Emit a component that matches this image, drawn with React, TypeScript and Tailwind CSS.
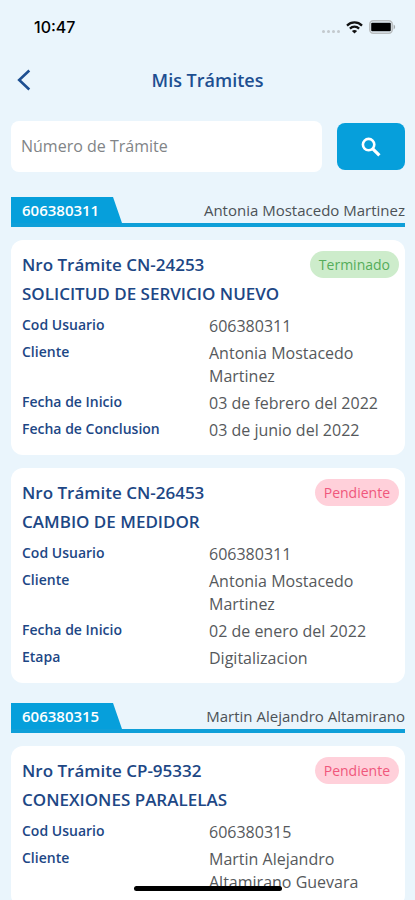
import React from 'react';

type Field = { label: string; value: string };

type Procedure = {
    code: string;
    title: string;
    status: 'Terminado' | 'Pendiente';
    fields: Field[];
};

type Account = {
    id: string;
    owner: string;
    procedures: Procedure[];
};

const accounts: Account[] = [
    {
        id: '606380311',
        owner: 'Antonia Mostacedo Martinez',
        procedures: [
            {
                code: 'CN-24253',
                title: 'SOLICITUD DE SERVICIO NUEVO',
                status: 'Terminado',
                fields: [
                    { label: 'Cod Usuario', value: '606380311' },
                    { label: 'Cliente', value: 'Antonia Mostacedo Martinez' },
                    { label: 'Fecha de Inicio', value: '03 de febrero del 2022' },
                    { label: 'Fecha de Conclusion', value: '03 de junio del 2022' },
                ],
            },
            {
                code: 'CN-26453',
                title: 'CAMBIO DE MEDIDOR',
                status: 'Pendiente',
                fields: [
                    { label: 'Cod Usuario', value: '606380311' },
                    { label: 'Cliente', value: 'Antonia Mostacedo Martinez' },
                    { label: 'Fecha de Inicio', value: '02 de enero del 2022' },
                    { label: 'Etapa', value: 'Digitalizacion' },
                ],
            },
        ],
    },
    {
        id: '606380315',
        owner: 'Martin Alejandro Altamirano',
        procedures: [
            {
                code: 'CP-95332',
                title: 'CONEXIONES PARALELAS',
                status: 'Pendiente',
                fields: [
                    { label: 'Cod Usuario', value: '606380315' },
                    { label: 'Cliente', value: 'Martin Alejandro Altamirano Guevara' },
                ],
            },
        ],
    },
];

const statusStyles = {
    Terminado: 'bg-[#cdeccb] text-[#55ad5a]',
    Pendiente: 'bg-[#ffd0da] text-[#f0577c]',
};

const StatusBar = () => (
    <div className="flex h-[54px] shrink-0 items-center justify-between pl-[34px] pr-[19px] font-['Inter',sans-serif]">
        <span className="text-base font-medium text-black">10:47</span>
        <div className="flex items-center gap-[6px]">
            <div className="flex gap-[2px] pt-2">
                <span className="size-[3px] rounded-full bg-[#c3c9cd]" />
                <span className="size-[3px] rounded-full bg-[#c3c9cd]" />
                <span className="size-[3px] rounded-full bg-[#c3c9cd]" />
                <span className="size-[3px] rounded-full bg-[#c3c9cd]" />
            </div>
            <svg width="17" height="13" viewBox="0 0 17 13" fill="none" stroke="#111" strokeWidth="2.2">
                <path d="M1 4.6C5.2 0.4 11.8 0.4 16 4.6" />
                <path d="M3.9 7.6C6.5 5 10.5 5 13.1 7.6" />
                <path d="M8.5 12.6L5.9 10C7.3 8.6 9.7 8.6 11.1 10Z" fill="#111" stroke="none" />
            </svg>
            <svg width="27" height="14" viewBox="0 0 27 14" fill="none">
                <rect x="0.8" y="0.8" width="22.4" height="12.4" rx="3.4" stroke="#b9bdbf" strokeWidth="1.6" />
                <rect x="2.2" y="2.8" width="19.6" height="8.4" rx="1" fill="#000" />
                <path d="M24.6 4.6C26.6 5.4 26.6 8.6 24.6 9.4Z" fill="#a5a9ab" />
            </svg>
        </div>
    </div>
);

const AccountHeader = ({ id, owner }: { id: string; owner: string }) => (
    <div className="flex h-[30px] items-start justify-between border-b-4 border-[#0f9fd8]">
        <span className="h-[26px] w-[111px] bg-[#069fdb] pl-[11px] text-[15px] leading-[27px] font-semibold text-white [clip-path:polygon(0_0,102px_0,100%_100%,0_100%)]">
            {id}
        </span>
        <span className="text-[15px] leading-[26px] text-[#4c5257]">{owner}</span>
    </div>
);

const ProcedureCard = ({ procedure }: { procedure: Procedure }) => (
    <article className="rounded-xl bg-white pt-[11px] pb-[13px] pl-[11px]">
        <div className="flex items-center justify-between pr-[6px]">
            <h2 className="text-[17px] leading-6 font-semibold text-[#1d4785]">Nro Trámite {procedure.code}</h2>
            <span className={`rounded-full px-[9px] text-sm leading-[27px] ${statusStyles[procedure.status]}`}>
                {procedure.status}
            </span>
        </div>
        <h3 className="mt-1 text-[17px] leading-6 font-semibold text-[#1d4785]">{procedure.title}</h3>
        <dl className="mt-[9px] flex flex-col gap-1 pr-[9px]">
            {procedure.fields.map((field) => (
                <div key={field.label} className="grid grid-cols-2">
                    <dt className="text-sm leading-[20px] font-semibold text-[#1d4785]">{field.label}</dt>
                    <dd className="text-base leading-[23px] text-[#56595c]">{field.value}</dd>
                </div>
            ))}
        </dl>
    </article>
);

const App = () => {
    return (
        <div className="flex h-screen flex-col overflow-hidden bg-[#eaf5fc] font-['Open_Sans','Noto_Sans',sans-serif]">
            <StatusBar />

            <header className="grid h-[52px] shrink-0 grid-cols-[48px_1fr_48px] items-center">
                <button type="button" aria-label="Volver" className="pl-[17px]">
                    <svg width="14" height="22" viewBox="0 0 14 22" fill="none" stroke="#1d4f91" strokeWidth="2.6">
                        <path d="M12.3 1.5L2.2 11L12.3 20.5" />
                    </svg>
                </button>
                <h1 className="text-center text-lg font-semibold text-[#1d4f91]">Mis Trámites</h1>
            </header>

            <main className="min-h-0 flex-1 overflow-y-auto pt-[15px] pr-[10px] pl-[11px] [scrollbar-width:none]">
                <form className="flex items-center gap-[15px]">
                    <input
                        type="text"
                        aria-label="Número de Trámite"
                        placeholder="Número de Trámite"
                        className="h-[51px] min-w-0 flex-1 rounded-lg bg-white px-[10px] pb-[2px] text-base text-[#56595c] outline-none placeholder:text-[#818487]"
                    />
                    <button
                        type="submit"
                        aria-label="Buscar"
                        className="flex h-[47px] w-[68px] items-center justify-center rounded-lg bg-[#069fdb] text-white"
                    >
                        <svg width="20" height="20" viewBox="0 0 20 20" fill="none" stroke="currentColor">
                            <circle cx="7.6" cy="7.6" r="5.7" strokeWidth="2.6" />
                            <path d="M11.8 11.8L18.4 18.4" strokeWidth="3.2" />
                        </svg>
                    </button>
                </form>

                {accounts.map((account) => (
                    <section key={account.id} className="mt-[25px] mb-[20px] flex flex-col gap-[13px] [&+&]:mt-0">
                        <AccountHeader id={account.id} owner={account.owner} />
                        {account.procedures.map((procedure) => (
                            <ProcedureCard key={procedure.code} procedure={procedure} />
                        ))}
                    </section>
                ))}
            </main>

            {/* Home indicator */}
            <div className="pointer-events-none fixed inset-x-0 bottom-[9px] flex justify-center">
                <div className="h-[5px] w-[148px] rounded-full bg-black" />
            </div>
        </div>
    );
};

export default App;
